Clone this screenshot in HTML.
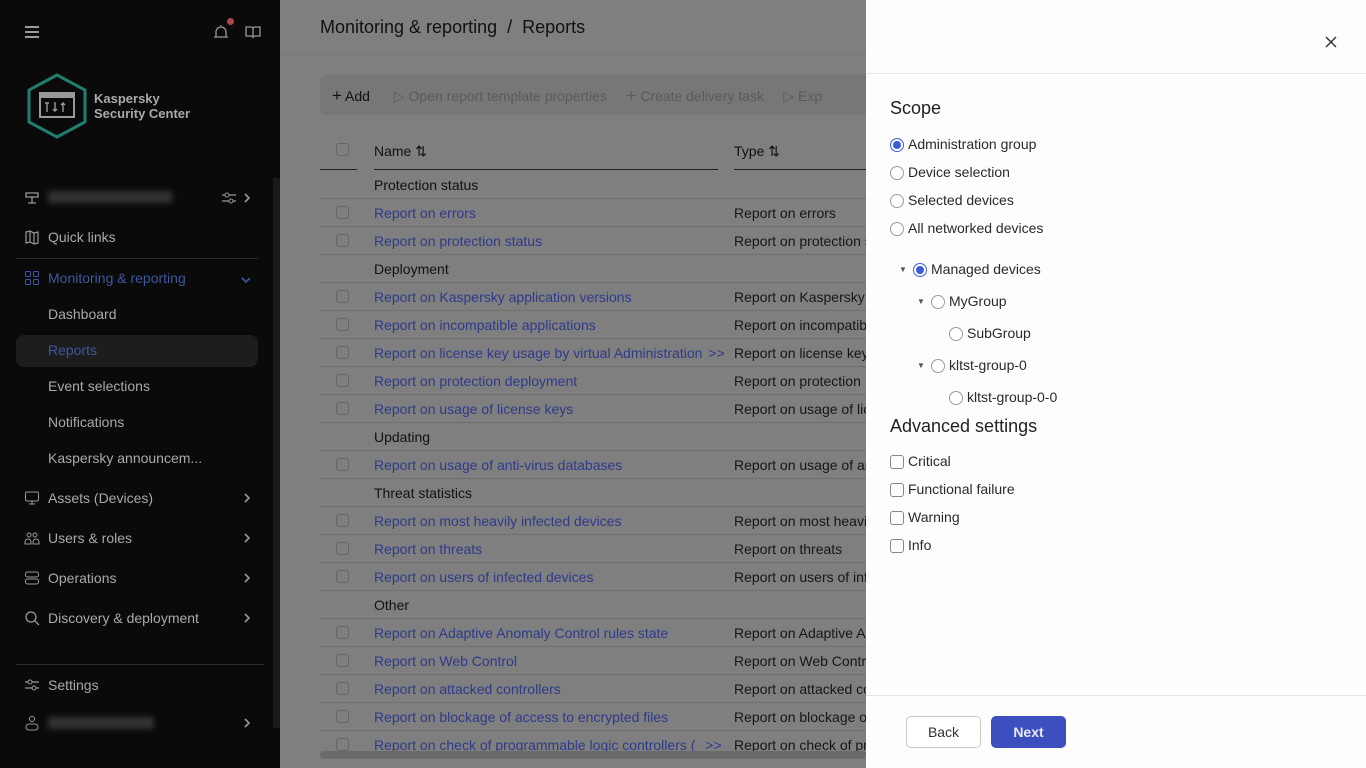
<!DOCTYPE html>
<html><head><meta charset="utf-8"><style>
*{box-sizing:border-box;margin:0;padding:0}
body{width:1366px;height:768px;overflow:hidden;font-family:"Liberation Sans",sans-serif;font-size:14px;position:relative;background:#7f7f7f}
.sb{position:absolute;left:0;top:0;width:280px;height:768px;background:#0a0a0a;color:#a9a9a9}
.sb .it{position:absolute;left:48px;font-size:14px}
.sb .ic{position:absolute;left:24px;width:16px;height:16px}
.chev{position:absolute;left:243px;width:8px;height:10px}
.main{position:absolute;left:280px;top:0;width:586px;height:768px;background:#7f7f7f;overflow:hidden}
.row{position:absolute;left:40px;width:560px;height:28px;border-bottom:1px solid #6e6e6e}
.row .cb{position:absolute;left:16px;top:7px;width:13px;height:13px;border:1px solid #666;border-radius:3px}
.row .n{position:absolute;left:54px;top:6px;color:#2e3a8c;white-space:nowrap}
.row .t{position:absolute;left:414px;top:6px;color:#161616;white-space:nowrap}
.row .g{position:absolute;left:54px;top:6px;color:#111}
.panel{position:absolute;left:866px;top:0;width:500px;height:768px;background:#fdfdfd;color:#222}
.rad{position:absolute;width:14px;height:14px;border:1px solid #9a9aa6;border-radius:50%;background:#fff}
.rad.on{border-color:#3b5bdb}
.rad.on::after{content:"";position:absolute;left:2px;top:2px;width:8px;height:8px;border-radius:50%;background:#3b5bdb}
.lbl{position:absolute;font-size:14px;color:#2a2a2a;white-space:nowrap}
.ck{position:absolute;left:24px;width:14px;height:14px;border:1px solid #888;border-radius:3px}
.tri{position:absolute;font-size:8px;color:#555}
</style></head><body>
<svg width="0" height="0" style="position:absolute"><defs><symbol id="cv" viewBox="0 0 8 10"><path d="M2 1l4 4-4 4" stroke="#999" stroke-width="1.6" fill="none"/></symbol></defs></svg>
<div class="sb">
  <div style="position:absolute;left:25px;top:26px;width:14px;height:2px;background:#999;box-shadow:0 5px 0 #999,0 10px 0 #999"></div>
  <svg style="position:absolute;left:212px;top:24px" width="18" height="16" viewBox="0 0 18 16"><path d="M4 13V8a5 5 0 0110 0v5M2 13h14M9 1v1" stroke="#999" stroke-width="1.3" fill="none"/></svg>
  <div style="position:absolute;left:227px;top:18px;width:7px;height:7px;border-radius:50%;background:#b04848"></div>
  <svg style="position:absolute;left:245px;top:25px" width="16" height="14" viewBox="0 0 16 14"><path d="M1 2h5a2 2 0 012 2v9a2 2 0 00-2-2H1zM15 2h-5a2 2 0 00-2 2v9a2 2 0 012-2h5z" stroke="#999" stroke-width="1.3" fill="none"/></svg>
  <svg style="position:absolute;left:26px;top:73px" width="62" height="66" viewBox="0 0 62 66"><polygon points="31,2 59,17 59,49 31,64 3,49 3,17" fill="none" stroke="#1f7e6e" stroke-width="3"/><rect x="14" y="20" width="34" height="24" fill="none" stroke="#999" stroke-width="2"/><rect x="14" y="20" width="34" height="5" fill="#999"/><path d="M21 30v9M19 30h4M29 29v9M27 36l2 2 2-2M37 30v9M35 32l2-2 2 2" stroke="#999" stroke-width="1.4" fill="none"/></svg>
  <div style="position:absolute;left:94px;top:91px;font-weight:bold;font-size:13px;color:#a9a9a9;line-height:15px">Kaspersky<br>Security Center</div>
  <div style="position:absolute;left:273px;top:178px;width:7px;height:550px;background:#1a1a1a"></div>
  <svg class="ic" style="top:190px" viewBox="0 0 16 16"><path d="M2 3h12v4H2zM8 7v6M4 13h8" stroke="#999" fill="none" stroke-width="1.3"/></svg>
  <div style="position:absolute;left:48px;top:191px;width:124px;height:12px;background:#333;filter:blur(3px)"></div>
  <svg style="position:absolute;left:221px;top:190px" width="16" height="16" viewBox="0 0 16 16"><path d="M1 5h14M1 11h14" stroke="#999" stroke-width="1.2"/><circle cx="6" cy="5" r="2" fill="#0a0a0a" stroke="#999"/><circle cx="10" cy="11" r="2" fill="#0a0a0a" stroke="#999"/></svg>
  <svg class="chev" style="top:193px"><use href="#cv"/></svg>
  <svg class="ic" style="top:229px" viewBox="0 0 16 16"><path d="M2 3l4-1 4 2 4-1v11l-4 1-4-2-4 1zM6 2v11M10 4v11" stroke="#999" fill="none" stroke-width="1.2"/></svg>
  <div class="it" style="top:229px">Quick links</div>
  <div style="position:absolute;left:16px;top:258px;width:242px;height:1px;background:#2a2a2a"></div>
  <svg class="ic" style="top:270px" viewBox="0 0 16 16"><rect x="1.5" y="1.5" width="5" height="5" rx="1" stroke="#3d57a0" fill="none"/><rect x="9.5" y="1.5" width="5" height="5" rx="1" stroke="#3d57a0" fill="none"/><rect x="1.5" y="9.5" width="5" height="5" rx="1" stroke="#3d57a0" fill="none"/><rect x="9.5" y="9.5" width="5" height="5" rx="1" stroke="#3d57a0" fill="none"/></svg>
  <div class="it" style="top:270px;color:#3d57a0">Monitoring &amp; reporting</div>
  <svg style="position:absolute;left:241px;top:276px" width="10" height="8" viewBox="0 0 10 8"><path d="M1 2l4 4 4-4" stroke="#3d57a0" stroke-width="1.6" fill="none"/></svg>
  <div class="it" style="top:306px">Dashboard</div>
  <div style="position:absolute;left:16px;top:335px;width:242px;height:32px;background:#1d1d1d;border-radius:8px"></div>
  <div class="it" style="top:342px;color:#3d57a0">Reports</div>
  <div class="it" style="top:378px">Event selections</div>
  <div class="it" style="top:414px">Notifications</div>
  <div class="it" style="top:450px">Kaspersky announcem...</div>
  <svg class="ic" style="top:490px" viewBox="0 0 16 16"><rect x="1.5" y="2" width="13" height="9" rx="1.5" stroke="#999" fill="none"/><path d="M8 11v3M5 14h6" stroke="#999"/></svg>
  <div class="it" style="top:490px">Assets (Devices)</div><svg class="chev" style="top:493px"><use href="#cv"/></svg>
  <svg class="ic" style="top:530px" viewBox="0 0 16 16"><circle cx="5" cy="5" r="2" stroke="#999" fill="none"/><circle cx="11" cy="5" r="2" stroke="#999" fill="none"/><path d="M1 14v-2a3 3 0 016 0v2zM9 14v-2a3 3 0 016 0v2z" stroke="#999" fill="none"/></svg>
  <div class="it" style="top:530px">Users &amp; roles</div><svg class="chev" style="top:533px"><use href="#cv"/></svg>
  <svg class="ic" style="top:570px" viewBox="0 0 16 16"><rect x="1.5" y="2" width="13" height="5" rx="2" stroke="#999" fill="none"/><rect x="1.5" y="9" width="13" height="5" rx="2" stroke="#999" fill="none"/></svg>
  <div class="it" style="top:570px">Operations</div><svg class="chev" style="top:573px"><use href="#cv"/></svg>
  <svg class="ic" style="top:610px" viewBox="0 0 16 16"><circle cx="7" cy="7" r="5" stroke="#999" fill="none" stroke-width="1.3"/><path d="M11 11l4 4" stroke="#999" stroke-width="1.3"/></svg>
  <div class="it" style="top:610px">Discovery &amp; deployment</div><svg class="chev" style="top:613px"><use href="#cv"/></svg>
  <div style="position:absolute;left:16px;top:664px;width:248px;height:1px;background:#2a2a2a"></div>
  <svg class="ic" style="top:677px" viewBox="0 0 16 16"><path d="M1 5h14M1 11h14" stroke="#999" stroke-width="1.2"/><circle cx="6" cy="5" r="2" fill="#0a0a0a" stroke="#999"/><circle cx="10" cy="11" r="2" fill="#0a0a0a" stroke="#999"/></svg>
  <div class="it" style="top:677px">Settings</div>
  <svg class="ic" style="top:715px" viewBox="0 0 16 16"><circle cx="8" cy="4" r="2.5" stroke="#999" fill="none"/><rect x="2" y="9" width="12" height="6" rx="3" stroke="#999" fill="none"/></svg>
  <div style="position:absolute;left:48px;top:717px;width:106px;height:12px;background:#333;filter:blur(3px)"></div>
  <svg class="chev" style="top:718px"><use href="#cv"/></svg>
</div>
<div class="main">
  <div style="position:absolute;left:40px;top:17px;font-size:18px;color:#111">Monitoring &amp; reporting &nbsp;/&nbsp; Reports</div>
  <div style="position:absolute;left:0;top:54px;width:586px;height:1px;background:#777"></div>
  <div style="position:absolute;left:40px;top:75px;width:560px;height:40px;background:#777;border-radius:6px"></div>
  <div style="position:absolute;left:52px;top:86px;color:#111;white-space:nowrap"><span style="font-size:17px">+</span> Add <span style="color:#5a5a5a;margin-left:20px">&#x25B7; Open report template properties &nbsp;&nbsp;&nbsp; <span style="font-size:17px">+</span> Create delivery task &nbsp;&nbsp;&nbsp; &#x25B7; Exp</span></div>
  <div style="position:absolute;left:56px;top:143px;width:13px;height:13px;border:1px solid #666;border-radius:3px"></div>
  <div style="position:absolute;left:94px;top:143px;color:#111">Name &#x21C5;</div>
  <div style="position:absolute;left:454px;top:143px;color:#111">Type &#x21C5;</div>
  <div style="position:absolute;left:40px;top:169px;width:37px;height:1px;background:#222"></div>
  <div style="position:absolute;left:94px;top:169px;width:344px;height:1px;background:#222"></div>
  <div style="position:absolute;left:454px;top:169px;width:140px;height:1px;background:#222"></div>
  <div class="row" style="top:171px"><div class="g">Protection status</div></div>
  <div class="row" style="top:199px"><div class="cb"></div><div class="n">Report on errors</div><div class="t">Report on errors</div></div>
  <div class="row" style="top:227px"><div class="cb"></div><div class="n">Report on protection status</div><div class="t">Report on protection status</div></div>
  <div class="row" style="top:255px"><div class="g">Deployment</div></div>
  <div class="row" style="top:283px"><div class="cb"></div><div class="n">Report on Kaspersky application versions</div><div class="t">Report on Kaspersky application</div></div>
  <div class="row" style="top:311px"><div class="cb"></div><div class="n">Report on incompatible applications</div><div class="t">Report on incompatible</div></div>
  <div class="row" style="top:339px"><div class="cb"></div><div class="n">Report on license key usage by virtual Administration <span style="margin-left:2px">&gt;&gt;</span></div><div class="t">Report on license key</div></div>
  <div class="row" style="top:367px"><div class="cb"></div><div class="n">Report on protection deployment</div><div class="t">Report on protection</div></div>
  <div class="row" style="top:395px"><div class="cb"></div><div class="n">Report on usage of license keys</div><div class="t">Report on usage of license</div></div>
  <div class="row" style="top:423px"><div class="g">Updating</div></div>
  <div class="row" style="top:451px"><div class="cb"></div><div class="n">Report on usage of anti-virus databases</div><div class="t">Report on usage of anti</div></div>
  <div class="row" style="top:479px"><div class="g">Threat statistics</div></div>
  <div class="row" style="top:507px"><div class="cb"></div><div class="n">Report on most heavily infected devices</div><div class="t">Report on most heavily</div></div>
  <div class="row" style="top:535px"><div class="cb"></div><div class="n">Report on threats</div><div class="t">Report on threats</div></div>
  <div class="row" style="top:563px"><div class="cb"></div><div class="n">Report on users of infected devices</div><div class="t">Report on users of infected</div></div>
  <div class="row" style="top:591px"><div class="g">Other</div></div>
  <div class="row" style="top:619px"><div class="cb"></div><div class="n">Report on Adaptive Anomaly Control rules state</div><div class="t">Report on Adaptive Anomaly</div></div>
  <div class="row" style="top:647px"><div class="cb"></div><div class="n">Report on Web Control</div><div class="t">Report on Web Control</div></div>
  <div class="row" style="top:675px"><div class="cb"></div><div class="n">Report on attacked controllers</div><div class="t">Report on attacked controllers</div></div>
  <div class="row" style="top:703px"><div class="cb"></div><div class="n">Report on blockage of access to encrypted files</div><div class="t">Report on blockage of</div></div>
  <div class="row" style="top:731px"><div class="cb"></div><div class="n">Report on check of programmable logic controllers ( <span style="margin-left:6px">&gt;&gt;</span></div><div class="t">Report on check of programmable</div></div>
  <div style="position:absolute;left:40px;top:751px;width:546px;height:7px;background:#6a6a6a;border-radius:3px"></div>
</div>
<div class="panel">
  <svg style="position:absolute;left:459px;top:36px" width="12" height="12" viewBox="0 0 12 12"><path d="M1 1l10 10M11 1L1 11" stroke="#333" stroke-width="1.5"/></svg>
  <div style="position:absolute;left:0;top:73px;width:500px;height:1px;background:#e6e6e6"></div>
  <div style="position:absolute;left:24px;top:98px;font-size:18px;color:#222">Scope</div>
  <div class="rad on" style="left:24px;top:138px"></div><div class="lbl" style="left:42px;top:136px">Administration group</div>
  <div class="rad" style="left:24px;top:166px"></div><div class="lbl" style="left:42px;top:164px">Device selection</div>
  <div class="rad" style="left:24px;top:194px"></div><div class="lbl" style="left:42px;top:192px">Selected devices</div>
  <div class="rad" style="left:24px;top:222px"></div><div class="lbl" style="left:42px;top:220px">All networked devices</div>
  <div class="tri" style="left:33px;top:265px">&#x25BC;</div>
  <div class="rad on" style="left:47px;top:263px"></div><div class="lbl" style="left:65px;top:261px">Managed devices</div>
  <div class="tri" style="left:51px;top:297px">&#x25BC;</div>
  <div class="rad" style="left:65px;top:295px"></div><div class="lbl" style="left:83px;top:293px">MyGroup</div>
  <div class="rad" style="left:83px;top:327px"></div><div class="lbl" style="left:101px;top:325px">SubGroup</div>
  <div class="tri" style="left:51px;top:361px">&#x25BC;</div>
  <div class="rad" style="left:65px;top:359px"></div><div class="lbl" style="left:83px;top:357px">kltst-group-0</div>
  <div class="rad" style="left:83px;top:391px"></div><div class="lbl" style="left:101px;top:389px">kltst-group-0-0</div>
  <div style="position:absolute;left:24px;top:416px;font-size:18px;color:#222">Advanced settings</div>
  <div class="ck" style="top:455px"></div><div class="lbl" style="left:42px;top:453px">Critical</div>
  <div class="ck" style="top:483px"></div><div class="lbl" style="left:42px;top:481px">Functional failure</div>
  <div class="ck" style="top:511px"></div><div class="lbl" style="left:42px;top:509px">Warning</div>
  <div class="ck" style="top:539px"></div><div class="lbl" style="left:42px;top:537px">Info</div>
  <div style="position:absolute;left:0;top:695px;width:500px;height:1px;background:#e6e6e6"></div>
  <div style="position:absolute;left:40px;top:716px;width:75px;height:32px;border:1px solid #c8c8c8;border-radius:5px;background:#fff;text-align:center;line-height:30px;color:#333">Back</div>
  <div style="position:absolute;left:125px;top:716px;width:75px;height:32px;border-radius:5px;background:#3b4fbf;text-align:center;line-height:32px;color:#e8eaf8;font-weight:bold">Next</div>
</div>
</body></html>
